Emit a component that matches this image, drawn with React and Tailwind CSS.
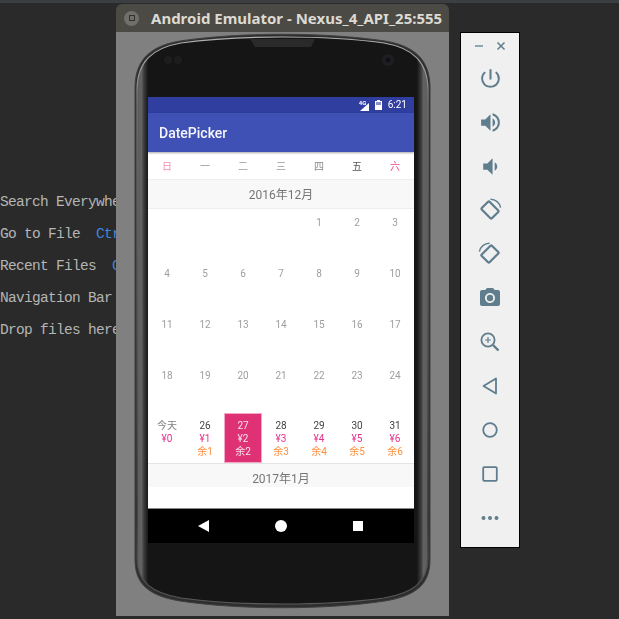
import React from "react";
import { MdPowerSettingsNew, MdVolumeUp, MdVolumeDown, MdPhotoCamera } from "react-icons/md";

const sans = "font-['Roboto','Noto_Sans_CJK_SC',sans-serif]";

function Rotate({ flip }) {
  return (
    <svg width="24" height="24" viewBox="0 0 24 24" fill="none" stroke="#5f7d8c" className={flip ? "-scale-x-100" : ""}>
      <rect x="4.8" y="6.5" width="14.4" height="11" rx="1" strokeWidth="2.2" transform="rotate(45 12 12)" />
      <path d="M12.5 1.2 C17.5 1.2 21.8 4.8 22.6 9.6" strokeWidth="1.4" />
    </svg>
  );
}

function ZoomIcon() {
  return (
    <svg width="24" height="24" viewBox="0 0 24 24" fill="none" stroke="#5f7d8c">
      <circle cx="10" cy="10" r="6.6" strokeWidth="1.8" />
      <path d="M15 15 L20.5 20.5" strokeWidth="2.4" />
      <path d="M10 7 V13 M7 10 H13" strokeWidth="1.2" />
    </svg>
  );
}

const tools = [
  <MdPowerSettingsNew size={25} color="#5f7d8c" />,
  <MdVolumeUp size={25} color="#5f7d8c" />,
  <MdVolumeDown size={25} color="#5f7d8c" />,
  <Rotate />,
  <Rotate flip />,
  <MdPhotoCamera size={24} color="#5f7d8c" />,
  <ZoomIcon />,
  <svg width="24" height="24" viewBox="0 0 24 24" fill="none" stroke="#5f7d8c" strokeWidth="1.8" strokeLinejoin="round"><path d="M18 4.5 V19.5 L5.5 12 Z" /></svg>,
  <svg width="24" height="24" viewBox="0 0 24 24" fill="none" stroke="#5f7d8c" strokeWidth="1.8"><circle cx="12" cy="12" r="6.8" /></svg>,
  <svg width="24" height="24" viewBox="0 0 24 24" fill="none" stroke="#5f7d8c" strokeWidth="1.8"><rect x="5.2" y="5.2" width="13.6" height="13.6" rx="1" /></svg>,
  <svg width="24" height="24" viewBox="0 0 24 24" fill="#5f7d8c"><circle cx="5.5" cy="12" r="2" /><circle cx="12" cy="12" r="2" /><circle cx="18.5" cy="12" r="2" /></svg>,
];

const weekdays = [
  ["日", "text-[#f48fb1]"],
  ["一", "text-[#9a9a9a]"],
  ["二", "text-[#9a9a9a]"],
  ["三", "text-[#9a9a9a]"],
  ["四", "text-[#8a8a8a]"],
  ["五", "text-[#555555]"],
  ["六", "text-[#e9478a]"],
];

const rows = [
  ["", "", "", "", "1", "2", "3"],
  ["4", "5", "6", "7", "8", "9", "10"],
  ["11", "12", "13", "14", "15", "16", "17"],
  ["18", "19", "20", "21", "22", "23", "24"],
];

const lastRow = [
  ["今天", "¥0", ""],
  ["26", "¥1", "余1"],
  ["27", "¥2", "余2"],
  ["28", "¥3", "余3"],
  ["29", "¥4", "余4"],
  ["30", "¥5", "余5"],
  ["31", "¥6", "余6"],
];

function PhoneFrame() {
  return (
    <svg className="absolute inset-0" width="333" height="584" viewBox="116 32 333 584">
      <defs>
        <linearGradient id="side" gradientUnits="userSpaceOnUse" x1="135" x2="430" y1="0" y2="0">
          <stop offset="0" stopColor="#3a3a3a" />
          <stop offset="0.012" stopColor="#5e5e5e" />
          <stop offset="0.022" stopColor="#626262" />
          <stop offset="0.03" stopColor="#3c3c3c" />
          <stop offset="0.045" stopColor="#151515" />
          <stop offset="0.955" stopColor="#151515" />
          <stop offset="0.97" stopColor="#3c3c3c" />
          <stop offset="0.978" stopColor="#626262" />
          <stop offset="0.988" stopColor="#5e5e5e" />
          <stop offset="1" stopColor="#3a3a3a" />
        </linearGradient>
        <linearGradient id="rim" x1="0" x2="0" y1="0" y2="1">
          <stop offset="0" stopColor="#b0b0b0" />
          <stop offset="0.12" stopColor="#777777" />
          <stop offset="0.85" stopColor="#3a3a3a" />
          <stop offset="1" stopColor="#5a5a5a" />
        </linearGradient>
      </defs>
      <path d="M135 88 C135 60 150 46 180 41 C240 32 325 32 385 41 C415 46 430 60 430 88 L430 560 C430 585 415 596 385 601 C325 610 240 610 180 601 C150 596 135 585 135 560 Z" fill="#2e2e2e" stroke="#3f3f3f" strokeWidth="1" />
      <path d="M137 90 C137 62 152 48 181 43 C240 35 325 35 384 43 C413 48 428 62 428 90 L428 558 C428 582 413 593 384 598 C325 606 240 606 181 598 C152 593 137 582 137 558 Z" fill="url(#side)" stroke="url(#rim)" strokeWidth="1.2" />
      <path d="M250 39 L315 39 L311 47 L255 47 Z" fill="#2a2a2a" />
      <circle cx="168" cy="60" r="4" fill="#1d1d1d" />
      <circle cx="178" cy="60" r="4" fill="#1d1d1d" />
      <circle cx="388" cy="60" r="6" fill="#1e1e24" />
      <circle cx="388" cy="60" r="2.5" fill="#111114" />
    </svg>
  );
}

function Screen() {
  return (
    <div className={`relative z-10 flex h-[446px] w-[266px] flex-col overflow-hidden bg-white blur-[0.3px] ${sans}`}>
      <div className="flex h-[16px] shrink-0 items-center justify-end gap-[3px] bg-[#303f9f] pr-[7px] text-white">
        <div className="relative h-[11px] w-[13px]">
          <span className="absolute left-[0px] top-[-1px] text-[6px] font-bold leading-[7px]">4G</span>
          <svg className="absolute left-0 top-0" width="13" height="11" viewBox="0 0 13 11"><path d="M1 11 L10 3 V11 Z" fill="#fff" /></svg>
        </div>
        <svg width="7" height="10" viewBox="0 0 7 10"><path d="M2 0 H5 V1 H7 V10 H0 V1 H2 Z" fill="#fff" /><rect x="1" y="2" width="5" height="3" fill="#8a92c9" /></svg>
        <span className="ml-[3px] text-[10px] leading-none">6:21</span>
      </div>
      <div className="z-10 flex h-[39px] shrink-0 items-center bg-[#3f51b5] pl-[11px] pt-[2px] text-[14px] font-medium text-[#f5f6fb] shadow-[0_1px_2px_rgba(0,0,0,0.35)]">
        DatePicker
      </div>
      <div className="grid h-[28px] shrink-0 grid-cols-7 items-center border-b border-[#eeeeee] pt-[2px] text-[10px]">
        {weekdays.map(([d, c]) => (
          <span key={d} className={`text-center ${c}`}>{d}</span>
        ))}
      </div>
      <div className="flex h-[29px] shrink-0 items-center justify-center border-b border-[#eeeeee] bg-[#f8f8f8] pt-[1px] text-[12px] text-[#757575]">
        2016年12月
      </div>
      {rows.map((row, i) => (
        <div key={i} className="grid h-[51px] shrink-0 grid-cols-7 pt-[7px] text-center text-[10px] leading-[14px] text-[#9e9e9e]">
          {row.map((n, j) => <span key={j}>{n}</span>)}
        </div>
      ))}
      <div className="grid h-[51px] shrink-0 grid-cols-7 border-b border-[#e4e4e4] text-center text-[10px] leading-[13px]">
        {lastRow.map(([a, b, c], i) => {
          const sel = i === 2;
          return (
            <div key={a} className={`flex h-[50px] flex-col pt-[6px] ${sel ? "bg-[#de3275] text-[#fbe3ec] outline outline-[#f3a9c6] -outline-offset-1" : ""}`}>
              <span className={sel ? "" : i === 0 ? "text-[#808080]" : "text-[#424242]"}>{a}</span>
              <span className={sel ? "" : "text-[#e5338a]"}>{b}</span>
              <span className={sel ? "" : "text-[#ff8f3e]"}>{c}</span>
            </div>
          );
        })}
      </div>
      <div className="flex h-[23px] shrink-0 items-end justify-center bg-[#f8f8f8] text-[12px] leading-[15px] text-[#757575]">
        2017年1月
      </div>
      <div className="h-[22px] shrink-0 border-b border-[#888888]" />
      <div className="flex h-[34px] shrink-0 items-center justify-center gap-[66px] bg-black pr-[1px]">
        <svg width="11" height="12" viewBox="0 0 11 12"><path d="M11 0 V12 L0 6 Z" fill="#fff" /></svg>
        <div className="h-[12px] w-[12px] rounded-full bg-white" />
        <div className="h-[10px] w-[10px] bg-white" />
      </div>
    </div>
  );
}

export default function App() {
  return (
    <div className="relative h-[619px] w-[619px] overflow-hidden bg-[#2a2a2a]">
      <div className="h-[3px] bg-[#3c3f41]" />
      <div className="flex flex-col pt-[183px] font-['Liberation_Mono',monospace] text-[14.5px] leading-[32px] tracking-[-0.7px] whitespace-pre text-[#b5b5b5]">
        <div>Search Everywhere</div>
        <div>Go to File  <span className="text-[#3f86d8]">Ctrl</span></div>
        <div>Recent Files  <span className="text-[#3f86d8]">Ctrl</span></div>
        <div>Navigation Bar</div>
        <div>Drop files here</div>
      </div>

      <div className="absolute left-[116px] top-[4px] flex h-[612px] w-[333px] flex-col overflow-hidden rounded-t-[6px]">
        <div className="flex h-[28px] shrink-0 items-center bg-[#4b4a44] pl-[8px]">
          <div className="flex h-[15px] w-[15px] shrink-0 items-center justify-center rounded-full bg-[#716f69]">
            <div className="h-[6px] w-[6px] border border-[#33322e]" />
          </div>
          <span className="ml-[12px] whitespace-nowrap font-['Noto_Sans',sans-serif] text-[15px] font-bold text-[#dcdad2]">
            Android Emulator - Nexus_4_API_25:555
          </span>
        </div>
        <div className="relative flex-1 bg-[#808080] pl-[32px] pt-[65px]">
          <PhoneFrame />
          <Screen />
        </div>
      </div>

      <div className="absolute left-[460px] top-[32px] flex h-[516px] w-[60px] flex-col items-center border border-black bg-[#f0f0f0]">
        <div className="flex h-[23px] w-full shrink-0 items-start justify-center gap-[13px] pt-[8px]">
          <div className="mt-[4px] h-[1.5px] w-[8px] bg-[#8fa5b0]" />
          <svg width="10" height="10" viewBox="0 0 10 10" stroke="#5f7d8c" strokeWidth="1.5"><path d="M1.5 1.5 L8.5 8.5 M8.5 1.5 L1.5 8.5" /></svg>
        </div>
        <div className="flex flex-col">
          {tools.map((t, i) => (
            <div key={i} className="flex h-[44px] w-[58px] items-center justify-center">{t}</div>
          ))}
        </div>
      </div>
    </div>
  );
}
